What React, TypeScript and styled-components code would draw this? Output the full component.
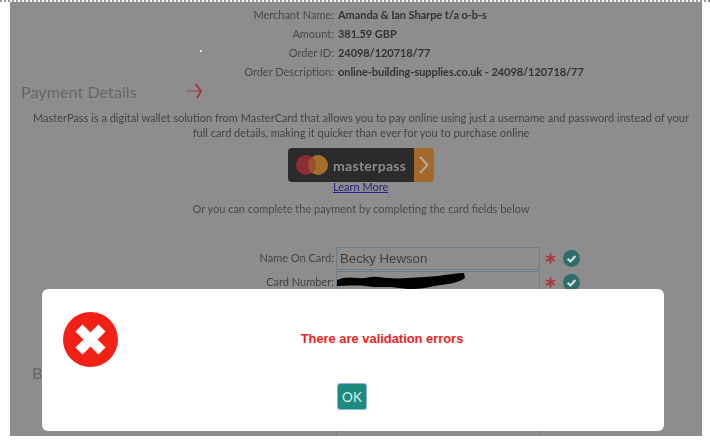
import styled, { createGlobalStyle } from 'styled-components';

const orderRows = [
    ['Merchant Name:', 'Amanda & Ian Sharpe t/a o-b-s'],
    ['Amount:', '381.59 GBP'],
    ['Order ID:', '24098/120718/77'],
    ['Order Description:', 'online-building-supplies.co.uk - 24098/120718/77'],
];

const GlobalStyle = createGlobalStyle`
    html, body {
        margin: 0;
        padding: 0;
        background: #fff;
    }
    body {
        font-family: Lato, "Open Sans", sans-serif;
    }
`;

function Star() {
    return (
        <svg width="11" height="11" viewBox="0 0 11 11" stroke="#a8393a" strokeWidth="1.9">
            <path d="M5.5 0.5v10M1 3l9 5M10 3l-9 5" />
        </svg>
    );
}

function Check() {
    return (
        <svg width="17" height="17" viewBox="0 0 17 17">
            <circle cx="8.5" cy="8.5" r="8.5" fill="#2c6f68" />
            <path d="M4.6 8.8l2.8 2.7 5-5.4" fill="none" stroke="#d8d8d8" strokeWidth="2.2" />
        </svg>
    );
}

function Status() {
    return (
        <StatusIcons>
            <Star />
            <Check />
        </StatusIcons>
    );
}

export default function App() {
    return (
        <Screen>
            <GlobalStyle />
            <TopDots />
            <Backdrop>
                <Content>
                    <OrderInfo>
                        {orderRows.map(([label, value]) => (
                            <OrderRow key={label}>
                                <OrderLabel>{label}</OrderLabel>
                                <OrderValue>{value}</OrderValue>
                            </OrderRow>
                        ))}
                    </OrderInfo>
                    <Heading>
                        Payment Details
                        <svg width="16" height="18" viewBox="0 0 16 18" fill="none" stroke="#9c3a3c">
                            <path d="M0 9h13" strokeWidth="1" />
                            <path d="M8.5 2L14 9l-4 7" strokeWidth="2" />
                        </svg>
                    </Heading>
                    <Intro>
                        MasterPass is a digital wallet solution from MasterCard that allows you to pay online using just a
                        username and password instead of your full card details, making it quicker than ever for you to
                        purchase online
                    </Intro>
                    <MasterpassButton>
                        <MasterpassBody>
                            <svg width="32" height="20" viewBox="0 0 32 20">
                                <circle cx="10" cy="10" r="10" fill="#8e2c35" />
                                <circle cx="22" cy="10" r="10" fill="#a56f2b" />
                                <path d="M16 2a10 10 0 0 1 0 16a10 10 0 0 1 0-16z" fill="#94512a" />
                            </svg>
                            <MasterpassName>masterpass</MasterpassName>
                        </MasterpassBody>
                        <MasterpassArrow>
                            <svg width="10" height="18" viewBox="0 0 10 18" fill="none" stroke="#b8ab98" strokeWidth="2">
                                <path d="M1 1l7.5 8L1 17" />
                            </svg>
                        </MasterpassArrow>
                    </MasterpassButton>
                    <LearnMore href="#">Learn More</LearnMore>
                    <OrLine>Or you can complete the payment by completing the card fields below</OrLine>
                    <Fields>
                        <FieldRow>
                            <FieldLabel>Name On Card:</FieldLabel>
                            <FieldInput>Becky Hewson</FieldInput>
                            <Status />
                        </FieldRow>
                        <FieldRow>
                            <FieldLabel>Card Number:</FieldLabel>
                            <FieldInput>
                                <Scribble width="128" height="16" viewBox="0 0 128 16">
                                    <path
                                        d="M0 7c6-3 14-3 21-2s12-2 20-1 18 2 30 1 22-1 30-2 18-3 26-3l1 5c-6 4-14 6-24 7s-16 4-28 4-16-2-26-2-16 0-22-1S2 13 0 13z"
                                        fill="#000"
                                    />
                                </Scribble>
                            </FieldInput>
                            <Status />
                        </FieldRow>
                    </Fields>
                    <BillingHeading>Billing Details</BillingHeading>
                    <LastField>
                        <span />
                        <FieldInput />
                    </LastField>
                </Content>
                <Speck />
            </Backdrop>
            <Dialog>
                <DialogBody>
                    <svg width="55" height="55" viewBox="0 0 55 55">
                        <circle cx="27.5" cy="27.5" r="27.5" fill="#f32015" />
                        <path d="M16 16l23 23M39 16L16 39" stroke="#fff" strokeWidth="10" />
                    </svg>
                    <Message>There are validation errors</Message>
                </DialogBody>
                <OkButton>OK</OkButton>
            </Dialog>
        </Screen>
    );
}

const Screen = styled.div`
    position: relative;
    width: 710px;
    height: 444px;
    overflow: hidden;
    background: #fff;
`;

const TopDots = styled.div`
    height: 2px;
    background: repeating-linear-gradient(90deg, #9a9a9a 0 2px, #fff 2px 4px);
`;

const Backdrop = styled.div`
    position: relative;
    margin-left: 10px;
    width: 692px;
    height: 434px;
    overflow: hidden;
    background: #8d8d8d;
`;

const Content = styled.div`
    display: flex;
    flex-direction: column;
    padding-top: 3px;
    color: #414141;
    font-size: 11px;
    filter: blur(0.45px);
`;

const OrderInfo = styled.div`
    display: flex;
    flex-direction: column;
`;

const OrderRow = styled.div`
    display: grid;
    grid-template-columns: 324px 1fr;
    column-gap: 4px;
    height: 19px;
    line-height: 19px;
`;

const OrderLabel = styled.span`
    text-align: right;
    color: #484848;
`;

const OrderValue = styled.span`
    font-weight: 700;
    letter-spacing: -0.06px;
    color: #333;
`;

const Heading = styled.h2`
    display: flex;
    align-items: center;
    gap: 50px;
    margin: 0;
    padding-left: 11px;
    height: 20px;
    font-size: 16.2px;
    font-weight: 400;
    color: #666;
`;

const Intro = styled.p`
    margin: 9px 0 0;
    padding: 0 6px 0 16px;
    line-height: 15px;
    text-align: center;
    color: #444;
`;

const MasterpassButton = styled.div`
    display: flex;
    align-self: flex-start;
    margin: 8px 0 0 278px;
    width: 146px;
    height: 34px;
    border-radius: 4px;
    overflow: hidden;
`;

const MasterpassBody = styled.div`
    flex: 1;
    display: flex;
    align-items: center;
    gap: 5px;
    padding-left: 8px;
    background: #2b2b2b;
`;

const MasterpassName = styled.span`
    font-size: 14px;
    font-weight: 700;
    letter-spacing: 0.3px;
    color: #8c8c8c;
`;

const MasterpassArrow = styled.div`
    display: flex;
    align-items: center;
    justify-content: center;
    width: 20px;
    background: #a4692a;
`;

const LearnMore = styled.a`
    align-self: flex-start;
    margin: -2px 0 0 323px;
    line-height: 14px;
    color: #25258c;
`;

const OrLine = styled.div`
    margin-top: 7px;
    padding-left: 10px;
    line-height: 15px;
    text-align: center;
    color: #4a4a4a;
`;

const Fields = styled.div`
    display: flex;
    flex-direction: column;
    gap: 1px;
    margin-top: 31px;
`;

const FieldRow = styled.div`
    display: grid;
    grid-template-columns: 324px 204px auto;
    column-gap: 2px;
    align-items: center;
    height: 23px;
`;

const FieldLabel = styled.label`
    padding-bottom: 3px;
    text-align: right;
    color: #444;
`;

const FieldInput = styled.div`
    position: relative;
    box-sizing: border-box;
    height: 23px;
    padding-left: 3px;
    border: 1px solid #6f7d88;
    font-family: "Liberation Sans", Arial, sans-serif;
    font-size: 13.2px;
    line-height: 21px;
    color: #3f3f3f;
`;

const Scribble = styled.svg`
    position: absolute;
    left: 0;
    top: 1px;
`;

const StatusIcons = styled.div`
    display: flex;
    align-items: center;
    gap: 7px;
    margin-left: 3px;
`;

const BillingHeading = styled.h2`
    margin: 67px 0 0;
    padding-left: 22px;
    height: 24px;
    font-size: 16.2px;
    font-weight: 400;
    line-height: 24px;
    color: #666;
`;

const LastField = styled(FieldRow)`
    margin-top: 37px;
`;

const Speck = styled.i`
    position: absolute;
    left: 190px;
    top: 48px;
    width: 2px;
    height: 2px;
    border-radius: 50%;
    background: #fff;
`;

const Dialog = styled.div`
    position: absolute;
    left: 42px;
    top: 289px;
    box-sizing: border-box;
    width: 622px;
    height: 142px;
    display: flex;
    flex-direction: column;
    align-items: center;
    padding: 23px 16px 0 21px;
    border-radius: 6px;
    background: #fff;
`;

const DialogBody = styled.div`
    display: flex;
    align-items: center;
    align-self: stretch;
`;

const Message = styled.div`
    flex: 1;
    padding: 0 2px 2px 0;
    text-align: center;
    font-family: "Liberation Sans", Arial, sans-serif;
    font-size: 12.9px;
    font-weight: 700;
    color: #f5201d;
`;

const OkButton = styled.button`
    box-sizing: border-box;
    width: 30px;
    height: 27px;
    margin: 16px 0 0 -7px;
    padding: 0;
    border: 1px solid #8db4f0;
    border-radius: 3px;
    background: #1c8a7c;
    color: #dfeeea;
    font-family: Lato, sans-serif;
    font-size: 13.5px;
`;
